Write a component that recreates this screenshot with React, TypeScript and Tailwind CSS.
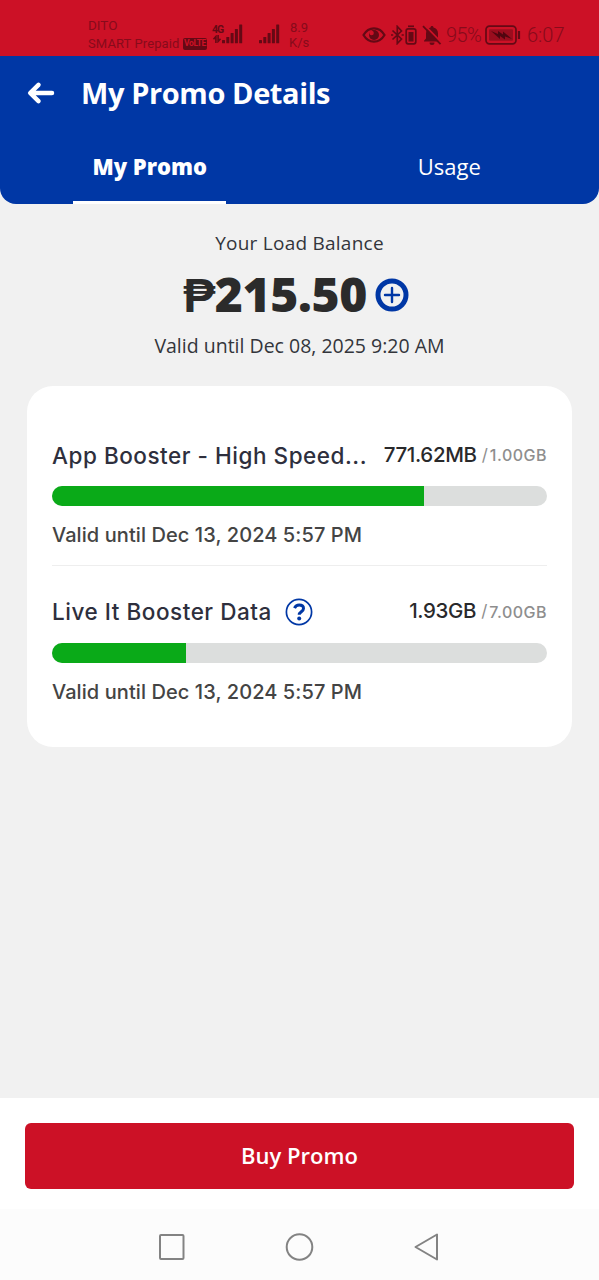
interface PromoProps {
    name: string;
    remaining: string;
    total: string;
    percent: number;
    validity: string;
    hasInfo?: boolean;
}

const promos: PromoProps[] = [
    {
        name: "App Booster - High Speed...",
        remaining: "771.62MB",
        total: "1.00GB",
        percent: 75.1,
        validity: "Valid until Dec 13, 2024 5:57 PM",
    },
    {
        name: "Live It Booster Data",
        remaining: "1.93GB",
        total: "7.00GB",
        percent: 27.1,
        validity: "Valid until Dec 13, 2024 5:57 PM",
        hasInfo: true,
    },
];

const SignalBars: React.FC = () => {
    return (
        <svg className="shrink-0" width="21" height="20" viewBox="0 0 21 20" fill="#650915">
            <rect x="0" y="16" width="3" height="3.300" rx="0.500" />
            <rect x="4.300" y="13" width="3" height="6.300" rx="0.500" />
            <rect x="8.600" y="9" width="3" height="10.300" rx="0.500" />
            <rect x="12.900" y="5" width="3" height="14.300" rx="0.500" />
            <rect x="17.200" y="0.500" width="3" height="18.800" rx="0.500" />
        </svg>
    );
}

const StatusBar: React.FC = () => {
    return (
        <div className="flex h-14 bg-[#cc1126] pl-[88px] font-['Roboto',sans-serif] text-[#870b1b]">
            <div className="w-[124px] shrink-0 pt-4">
                <div className="text-[13.5px] leading-[18px]">DITO</div>
                <div className="flex items-center gap-[3px] whitespace-nowrap">
                    <span className="w-[92px] text-[13px] leading-[19px] tracking-[0.1px]">SMART Prepaid</span>
                    <span className="flex h-[12px] w-[24px] items-center justify-center rounded-[2px] bg-[#650915] text-[8.5px] font-bold leading-none tracking-[-0.4px] text-[#cc1126]">VoLTE</span>
                </div>
            </div>
            <div className="flex w-[31px] shrink-0 pt-6">
                <div className="w-[10px] shrink-0 text-[#650915]">
                    <div className="text-[10.5px] font-bold leading-[11px] tracking-[-1px]">4G</div>
                    <svg width="10" height="8" viewBox="0 0 10 8" fill="none" stroke="#650915" strokeWidth="1.600">
                        <path d="M3.900 8V1.500L1.500 4.200M6.100 0V6.500L8.500 3.800" />
                    </svg>
                </div>
                <SignalBars />
            </div>
            <div className="ml-4 w-[30px] shrink-0 pt-6">
                <SignalBars />
            </div>
            <div className="w-[73px] shrink-0 pt-5 text-[13px] leading-[15px]">
                <div className="pl-px">8.9</div>
                <div>K/s</div>
            </div>
            <div className="flex h-[70px] items-center">
                <svg width="24" height="16" viewBox="0 0 24 16" fill="none" stroke="#650915" strokeWidth="2.200">
                    <path d="M1.500 8C4 3.700 7.500 1.400 12 1.400S20 3.700 22.500 8C20 12.300 16.500 14.600 12 14.600S4 12.300 1.500 8Z" />
                    <circle cx="12" cy="8" r="5" fill="#650915" stroke="none" />
                    <circle cx="9.600" cy="6" r="2.200" fill="#cc1126" stroke="none" />
                </svg>
                <svg className="ml-[5px]" width="13" height="20" viewBox="0 0 13 20" fill="none" stroke="#650915" strokeWidth="1.700">
                    <path d="M1.500 5.500 10.500 14 6.300 18.500V1.500L10.500 6 1.500 14.500" />
                    <path d="M0 10h2.200M10.600 10h2.200" />
                </svg>
                <svg className="ml-px" width="12" height="20" viewBox="0 0 12 20" fill="none" stroke="#650915" strokeWidth="1.700">
                    <path d="M3 1.300h6" />
                    <rect x="1.200" y="3.800" width="9.600" height="15" rx="2" />
                    <rect x="3.500" y="7" width="5" height="9.500" fill="#650915" stroke="none" />
                </svg>
                <svg className="ml-[5px]" width="20" height="20" viewBox="0 0 20 20" fill="#650915">
                    <path d="M10 1c1 0 1.500.6 1.500 1.500C14.300 3.200 16 5.300 16 8.500v5l2 2.300v.7H2v-.7l2-2.300v-5c0-3.200 1.700-5.300 4.500-6C8.500 1.600 9 1 10 1Z" />
                    <path d="M7.500 17.500h5a2.500 2.500 0 0 1-5 0Z" />
                    <path d="M2.500 0 20 18" stroke="#cc1126" strokeWidth="1.800" />
                    <path d="M1 1.200 18.500 19.200" stroke="#650915" strokeWidth="1.700" />
                </svg>
                <span className="ml-1 w-[37px] whitespace-nowrap text-[20px] font-light tracking-[-0.6px]">95%</span>
                <svg className="ml-[2px]" width="36" height="20" viewBox="0 0 36 20" fill="none" stroke="#650915" strokeWidth="1.700">
                    <rect x="1" y="1.200" width="30" height="17.600" rx="3.500" />
                    <rect x="4" y="4.200" width="24" height="11.600" rx="1" fill="#9a0d1e" stroke="none" />
                    <path d="M6 6l7 3 0-3 5 3.500 0-3 9 7.500-7-2.500 0 3-5-3.500 0 3Z" fill="#500610" stroke="none" />
                    <path d="M34 6v8" strokeWidth="2.200" />
                </svg>
                <span className="ml-[6px] whitespace-nowrap text-[20px] font-light">6:07</span>
            </div>
        </div>
    );
}

const Header: React.FC = () => {
    return (
        <div className="h-[148px] rounded-b-2xl bg-[#0037a5] text-white">
            <div className="flex h-[74px] items-center pl-[27px]">
                <svg width="28" height="24" viewBox="0 0 28 24" fill="none" stroke="white" strokeWidth="4.500" strokeLinecap="round" strokeLinejoin="round">
                    <path d="M25 12H4M11.500 3.800 3.200 12l8.300 8.200" />
                </svg>
                <h1 className="ml-[26px] whitespace-nowrap text-[29px] font-bold tracking-[-0.4px]">My Promo Details</h1>
            </div>
            <div className="flex h-[74px] text-[22px]">
                <div className="flex w-1/2 flex-col items-center">
                    <div className="flex h-[71px] items-center pt-[2px] font-extrabold">My Promo</div>
                    <div className="h-[3px] w-[153px] bg-white"></div>
                </div>
                <div className="flex h-[71px] w-1/2 items-center justify-center pt-[2px] font-medium">Usage</div>
            </div>
        </div>
    );
}

const Balance: React.FC = () => {
    return (
        <div className="flex h-[182px] flex-col items-center pt-[25px] text-[#33353b]">
            <div className="text-[19px] leading-[28px] tracking-[0.25px]">Your Load Balance</div>
            <div className="mt-[7px] mr-[7px] flex h-[60px] items-center gap-2 text-[#2b2b2b]">
                <span className="text-[48px] font-extrabold leading-[60px] tracking-[-0.4px]">₱215.50</span>
                <svg className="mt-[2px]" width="34" height="34" viewBox="0 0 34 34" fill="none" stroke="#0037a5">
                    <circle cx="17" cy="17" r="14" strokeWidth="5" />
                    <path d="M17 10v14M10 17h14" strokeWidth="2.400" strokeLinecap="round" />
                </svg>
            </div>
            <div className="mt-[8px] text-[19.5px] leading-[28px]">Valid until Dec 08, 2025 9:20 AM</div>
        </div>
    );
}

const Promo: React.FC<PromoProps> = ({ name, remaining, total, percent, validity, hasInfo }) => {
    return (
        <div className="h-[155px] pt-[29px]">
            <div className="flex h-8 items-center justify-between whitespace-nowrap">
                <div className="flex items-center gap-[13px]">
                    <h2 className="text-[22.5px] font-medium tracking-[0.53px] text-[#2e2f3d]">{name}</h2>
                    {hasInfo && (
                        <svg width="28" height="28" viewBox="0 0 28 28" fill="none" stroke="#0037a5">
                            <circle cx="14" cy="14" r="12.600" strokeWidth="1.700" />
                            <path d="M9.500 10.200C10.500 8 12 7.100 14.200 7.100c2.600 0 4.300 1.300 4.300 3.400 0 3.200-4.300 3.300-4.300 6.300" strokeWidth="3" />
                            <circle cx="14.200" cy="20.500" r="2" fill="#0037a5" stroke="none" />
                        </svg>
                    )}
                </div>
                <div className="flex items-center">
                    <span className="text-[20.5px] font-medium tracking-[-0.35px] text-[#29292b]">{remaining}</span>
                    <span className="ml-[5px] text-[17px] text-[#8e8e8e]">/</span>
                    <span className="ml-[2px] text-[16px] font-medium tracking-[0.5px] text-[#8e8e8e]">{total}</span>
                </div>
            </div>
            <div className="mt-[15px] h-5 overflow-hidden rounded-full bg-[#dcdedd]">
                <div className="h-full bg-[#0aaa18]" style={{ width: `${percent}%` }}></div>
            </div>
            <p className="mt-[14px] whitespace-nowrap text-[20px] font-medium leading-[30px] tracking-[0.08px] text-[#444444]">{validity}</p>
        </div>
    );
}

const NavBar: React.FC = () => {
    return (
        <div className="flex flex-1 items-center justify-center gap-[99px] bg-[#fcfcfc] pt-1">
            <svg width="28" height="28" viewBox="0 0 28 28" fill="none" stroke="#838383" strokeWidth="2">
                <rect x="2" y="2" width="23.500" height="24" rx="1" />
            </svg>
            <svg width="30" height="30" viewBox="0 0 30 30" fill="none" stroke="#838383" strokeWidth="2">
                <circle cx="14.500" cy="15" r="12.800" />
            </svg>
            <svg width="28" height="30" viewBox="0 0 28 30" fill="none" stroke="#838383" strokeWidth="2" strokeLinejoin="round">
                <path d="M23 2.500v25L1.500 15Z" />
            </svg>
        </div>
    );
}

const App: React.FC = () => {
    return (
        <div className="flex h-[1280px] w-[599px] flex-col overflow-hidden bg-[#f1f1f1] font-['Open_Sans',sans-serif]">
            <StatusBar />
            <Header />
            <Balance />
            <div className="mx-[27px] h-[361px] rounded-[26px] bg-white px-[25px] pt-[24.4px] font-['Inter',sans-serif]">
                <Promo {...promos[0]} />
                <div className="mb-[0.4px] h-px bg-[#eeeeee]"></div>
                <Promo {...promos[1]} />
            </div>
            <div className="flex-1"></div>
            <div className="flex h-[182px] flex-col bg-white pt-[25px]">
                <button className="mx-[25px] h-[66px] shrink-0 rounded-md bg-[#cc1126] pb-[2px] text-[22px] font-semibold text-white">Buy Promo</button>
                <div className="h-[20px] shrink-0"></div>
                <NavBar />
            </div>
        </div>
    );
}

export default App;
